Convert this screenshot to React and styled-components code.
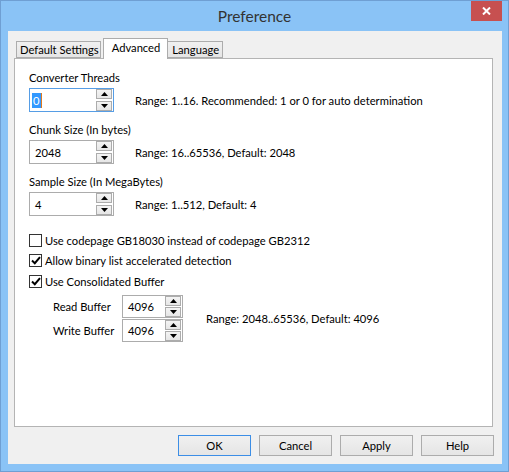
import React from "react";
import styled, { createGlobalStyle } from "styled-components";

const GlobalStyle = createGlobalStyle`
  html, body {
    margin: 0;
    padding: 0;
    background: #8ac3f6;
  }
  * {
    box-sizing: border-box;
  }
`;

const FONT = `"Lato", "Noto Sans", sans-serif`;

const Window = styled.div`
  width: 509px;
  height: 472px;
  border: 1px solid #6f9fd3;
  background: #8ac3f6;
  display: flex;
  flex-direction: column;
  font-family: ${FONT};
  font-size: 11.2px;
  color: #000;
`;

const TitleBar = styled.div`
  height: 30px;
  display: flex;
  align-items: flex-start;
`;

const Title = styled.div`
  flex: 1;
  text-align: center;
  padding-left: 37px;
  line-height: 30px;
  font-size: 15.5px;
  color: #333;
`;

const CloseButton = styled.div`
  width: 31px;
  height: 20px;
  margin-right: 6px;
  background: #c75050;
  display: flex;
  align-items: center;
  justify-content: center;
`;

const Client = styled.div`
  flex: 1;
  margin: 0 6px 7px 7px;
  background: #f0f0f0;
  display: flex;
  flex-direction: column;
  padding: 7px 9px 0 6px;
`;

const TabRow = styled.div`
  display: flex;
  align-items: flex-end;
  height: 20px;
  padding-left: 2px;
  position: relative;
  z-index: 1;
`;

const Tab = styled.div`
  height: ${(p) => (p.$active ? "21px" : "17px")};
  margin-bottom: ${(p) => (p.$active ? "-1px" : "0")};
  margin-right: ${(p) => (p.$gap ? "2px" : "0")};
  padding: ${(p) => p.$pad};
  border: 1px solid #acacac;
  border-bottom: ${(p) => (p.$active ? "none" : "1px solid #acacac")};
  border-left: ${(p) => (p.$noLeft ? "none" : "1px solid #acacac")};
  background: ${(p) =>
    p.$active ? "#fff" : "linear-gradient(#f0f0f0, #e5e5e5)"};
  line-height: ${(p) => (p.$active ? "17px" : "16px")};
  white-space: nowrap;
`;

const Panel = styled.div`
  flex: 1;
  background: #fff;
  border: 1px solid #b4b4b4;
  padding: 11px 14px 0 14px;
  display: flex;
  flex-direction: column;
`;

const Label = styled.div`
  line-height: 16px;
  height: 16px;
  margin-top: ${(p) => p.$top || 0}px;
`;

const SpinRow = styled.div`
  display: flex;
  align-items: center;
  margin-top: 2px;
`;

const SpinBox = styled.div`
  width: ${(p) => p.$w}px;
  height: ${(p) => p.$h}px;
  border: 1px solid ${(p) => (p.$focus ? "#569de5" : "#acacac")};
  display: flex;
  background: #fff;
`;

const SpinText = styled.div`
  flex: 1;
  padding-left: ${(p) => p.$pad}px;
  display: flex;
  align-items: center;
`;

const Selected = styled.span`
  background: #3399ff;
  color: #fff;
  padding: 0 1px;
  line-height: 15px;
  border-right: 1px solid #e07a1f;
`;

const SpinButtons = styled.div`
  width: 16px;
  margin-right: 1px;
  display: flex;
  flex-direction: column;
  justify-content: space-between;
`;

const SpinButton = styled.div`
  height: ${(p) => p.$h}px;
  border: 1px solid #acacac;
  background: linear-gradient(#f4f4f4, #e6e6e6);
  display: flex;
  align-items: center;
  justify-content: center;
`;

const Hint = styled.div`
  margin-left: ${(p) => p.$ml}px;
  white-space: nowrap;
`;

const CheckRow = styled.label`
  display: flex;
  align-items: center;
  height: ${(p) => p.$h}px;
  margin-top: ${(p) => p.$top || 0}px;
  gap: 3px;
`;

const Box = styled.span`
  width: 13px;
  height: 13px;
  border: 1px solid #333;
  background: #fff;
  display: flex;
  align-items: center;
  justify-content: center;
`;

const BufferSection = styled.div`
  display: flex;
  align-items: center;
  margin-top: 6px;
  padding-left: 24px;
`;

const BufferGrid = styled.div`
  display: grid;
  grid-template-columns: 69px auto;
  row-gap: 1px;
  align-items: center;
`;

const ButtonRow = styled.div`
  display: flex;
  justify-content: flex-end;
  gap: 8px;
  padding: 8px 0 8px 0;
  margin-right: -1px;
`;

const Button = styled.div`
  width: 73px;
  height: 21px;
  border: 1px solid ${(p) => (p.$default ? "#3c8ee6" : "#acacac")};
  background: linear-gradient(#f0f0f0, #e5e5e5);
  display: flex;
  align-items: center;
  justify-content: center;
`;

const Arrow = ({ down }) => (
  <svg width="7" height="4" viewBox="0 0 7 4">
    <path d={down ? "M0 0H7L3.5 4Z" : "M0 4H7L3.5 0Z"} fill="#000" />
  </svg>
);

const Spin = ({ value, w, h, pad, focus, btn }) => (
  <SpinBox $w={w} $h={h} $focus={focus}>
    <SpinText $pad={pad}>{value}</SpinText>
    <SpinButtons>
      <SpinButton $h={btn}>
        <Arrow />
      </SpinButton>
      <SpinButton $h={btn}>
        <Arrow down />
      </SpinButton>
    </SpinButtons>
  </SpinBox>
);

const Check = ({ checked }) => (
  <Box>
    {checked && (
      <svg width="10" height="9" viewBox="0 0 10 9">
        <path
          d="M1 4.5L3.8 7.2L9 1.2"
          stroke="#000"
          strokeWidth="2"
          fill="none"
        />
      </svg>
    )}
  </Box>
);

export default function App() {
  return (
    <>
      <GlobalStyle />
      <Window>
        <TitleBar>
          <Title>Preference</Title>
          <CloseButton>
            <svg width="9" height="8" viewBox="0 0 9 8">
              <path
                d="M1 0.5L8 7.5M8 0.5L1 7.5"
                stroke="#fff"
                strokeWidth="2"
              />
            </svg>
          </CloseButton>
        </TitleBar>
        <Client>
          <TabRow>
            <Tab $gap $pad="0 1px 0 3px">
              Default Settings
            </Tab>
            <Tab $active $pad="0 7px 0 8px">
              Advanced
            </Tab>
            <Tab $noLeft $pad="0 3px 0 4px">
              Language
            </Tab>
          </TabRow>
          <Panel>
            <Label>Converter Threads</Label>
            <SpinRow>
              <Spin
                value={<Selected>0</Selected>}
                w={85}
                h={24}
                pad={2}
                focus
                btn={10}
              />
              <Hint $ml={21}>
                Range: 1..16. Recommended: 1 or 0 for auto determination
              </Hint>
            </SpinRow>
            <Label $top={10}>Chunk Size (In bytes)</Label>
            <SpinRow>
              <Spin value="2048" w={85} h={24} pad={5} btn={10} />
              <Hint $ml={21}>Range: 16..65536, Default: 2048</Hint>
            </SpinRow>
            <Label $top={10}>Sample Size (In MegaBytes)</Label>
            <SpinRow>
              <Spin value="4" w={85} h={24} pad={5} btn={10} />
              <Hint $ml={21}>Range: 1..512, Default: 4</Hint>
            </SpinRow>
            <CheckRow $h={16} $top={16}>
              <Check />
              Use codepage GB18030 instead of codepage GB2312
            </CheckRow>
            <CheckRow $h={16} $top={4}>
              <Check checked />
              Allow binary list accelerated detection
            </CheckRow>
            <CheckRow $h={16} $top={5}>
              <Check checked />
              Use Consolidated Buffer
            </CheckRow>
            <BufferSection>
              <BufferGrid>
                <span>Read Buffer</span>
                <Spin value="4096" w={61} h={23} pad={5} btn={10} />
                <span>Write Buffer</span>
                <Spin value="4096" w={61} h={23} pad={5} btn={10} />
              </BufferGrid>
              <Hint $ml={23}>Range: 2048..65536, Default: 4096</Hint>
            </BufferSection>
          </Panel>
          <ButtonRow>
            <Button $default>OK</Button>
            <Button>Cancel</Button>
            <Button>Apply</Button>
            <Button>Help</Button>
          </ButtonRow>
        </Client>
      </Window>
    </>
  );
}
